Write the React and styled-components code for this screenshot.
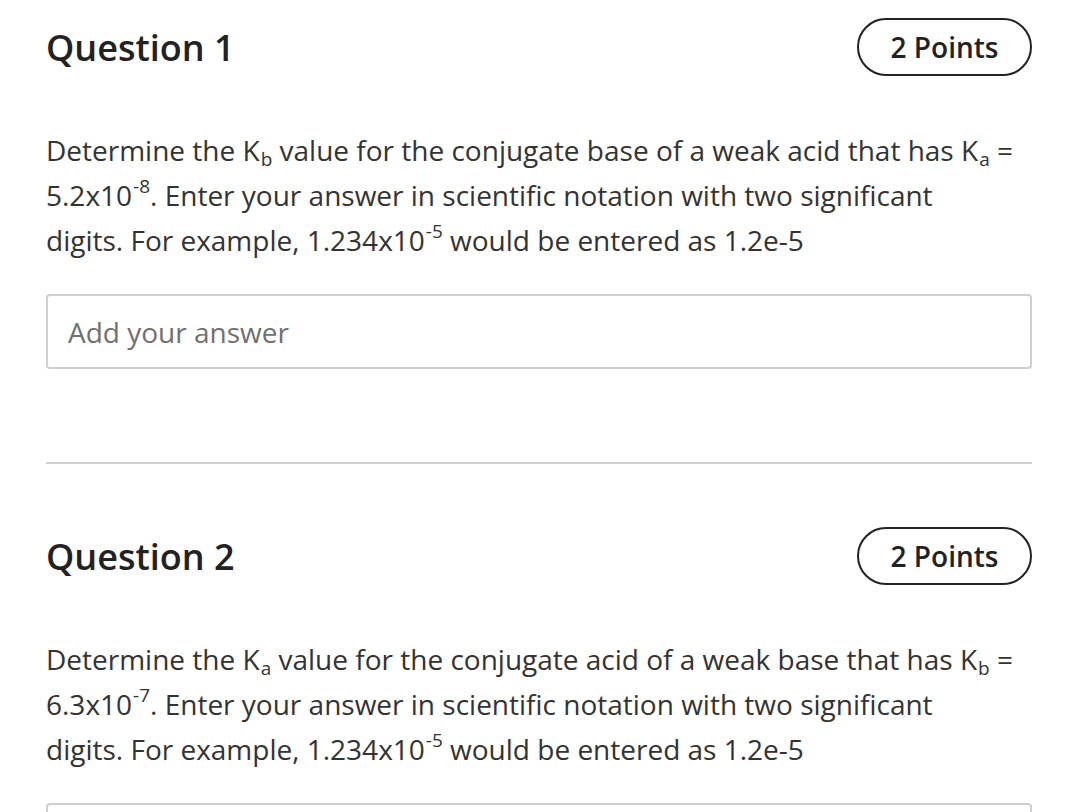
import React from "react";
import styled, { createGlobalStyle } from "styled-components";

const GlobalStyle = createGlobalStyle`
  body {
    margin: 0;
    background: #fff;
    font-family: "Open Sans", "Noto Sans", sans-serif;
    color: #333;
  }
`;

const questions = [
  {
    id: 1,
    points: 2,
    given: "a",
    asked: "b",
    what: "base of a weak acid",
    value: "5.2x10",
    exp: "-8",
  },
  {
    id: 2,
    points: 2,
    given: "b",
    asked: "a",
    what: "acid of a weak base",
    value: "6.3x10",
    exp: "-7",
  },
];

function Question({ q, last }) {
  return (
    <Section $last={last}>
      <Header>
        <Title>Question {q.id}</Title>
        <Points>{q.points} Points</Points>
      </Header>
      <Prompt>
        Determine the K<sub>{q.asked}</sub> value for the conjugate {q.what}{" "}
        that has K<sub>{q.given}</sub> = {q.value}
        <sup>{q.exp}</sup>. Enter your answer in scientific notation with two
        significant
        <br />
        digits. For example, 1.234x10<sup>-5</sup> would be entered as 1.2e-5
      </Prompt>
      <Answer type="text" placeholder="Add your answer" />
    </Section>
  );
}

export default function App() {
  return (
    <>
      <GlobalStyle />
      <Page>
        {questions.map((q, i) => (
          <Question key={q.id} q={q} last={i === questions.length - 1} />
        ))}
      </Page>
    </>
  );
}

const Page = styled.div`
  padding: 18px 56px 0 46px;
`;

const Section = styled.section`
  padding-bottom: ${(p) => (p.$last ? "0" : "93px")};
  margin-bottom: ${(p) => (p.$last ? "0" : "63px")};
  border-bottom: ${(p) => (p.$last ? "none" : "2px solid #cfcfcf")};
`;

const Header = styled.div`
  display: flex;
  justify-content: space-between;
  align-items: center;
  height: 58px;
`;

const Title = styled.h2`
  margin: 0;
  font-size: 36px;
  font-weight: 600;
  color: #222;
`;

const Points = styled.div`
  box-sizing: border-box;
  width: 175px;
  height: 58px;
  border: 2px solid #222;
  border-radius: 29px;
  display: flex;
  align-items: center;
  justify-content: center;
  font-size: 28px;
  font-weight: 600;
  color: #222;
`;

const Prompt = styled.p`
  margin: 52px 0 31px;
  font-size: 28px;
  line-height: 45px;
  color: #333;

  sub,
  sup {
    font-size: 19px;
    line-height: 0;
    margin-left: 1px;
  }
  sub {
    vertical-align: -5px;
  }
  sup {
    vertical-align: 13px;
  }
`;

const Answer = styled.input`
  box-sizing: border-box;
  display: block;
  width: 100%;
  height: 75px;
  padding: 0 20px;
  border: 2px solid #cfcfcf;
  border-radius: 4px;
  font-family: "Open Sans", "Noto Sans", sans-serif;
  font-size: 28px;
  color: #333;
  outline: none;

  &::placeholder {
    color: #707070;
  }
`;
